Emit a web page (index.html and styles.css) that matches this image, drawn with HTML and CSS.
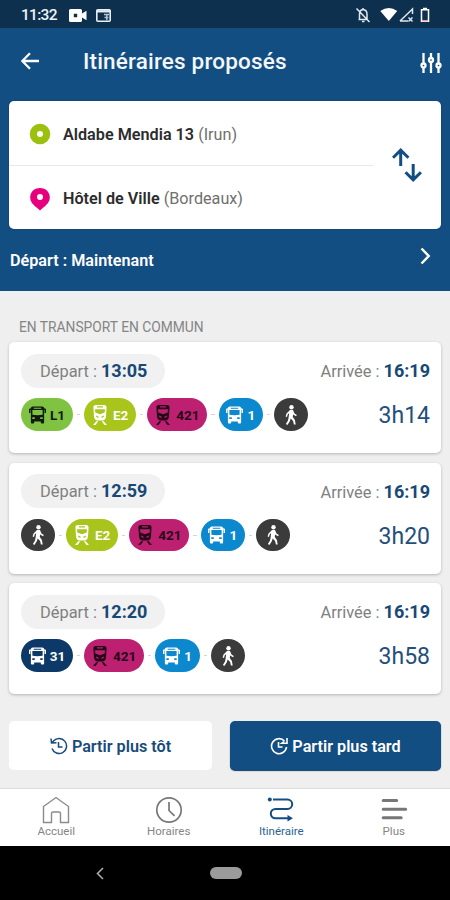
FILE: index.html
```html
<!DOCTYPE html>
<html lang="fr">
<head>
<meta charset="utf-8">
<title>Itinéraires proposés</title>
<link rel="stylesheet" href="styles.css">
</head>
<body>
<svg class="defs" width="0" height="0" aria-hidden="true">
  <symbol id="bus" viewBox="0 0 18 20">
    <path fill="currentColor" fill-rule="evenodd" d="M4 1h10q1.800 0 2.300 2H17q1 0 1 1v4h-1.500V4.500H16V18q0 1-1 1h-1.500q-1 0-1-1v-1h-7v1q0 1-1 1H3q-1 0-1-1V4.500h-.5V8H0V4q0-1 1-1h.7Q2.200 1 4 1ZM5 2.200v1.200h8V2.200ZM3.600 4.700v5.100q5.400 1 10.800 0V4.700ZM3.500 12.500v1.700h2.600v-1.700ZM11.900 12.500v1.700h2.600v-1.700Z"/>
  </symbol>
  <symbol id="train" viewBox="0 0 16 20">
    <path fill="currentColor" fill-rule="evenodd" d="M4 0h8q2.600 0 2.600 2.300L14 11.500Q13.500 15.500 10.500 15.500h-5Q2.500 15.500 2 11.500L1.400 2.300Q1.400 0 4 0ZM5 1.300v1.200h6V1.300ZM3 4.200 3.300 7.500 8 9.200l4.700-1.700.3-3.300ZM4 10.600l.3 1.400 2.200.9v-1.300ZM12 10.600l-2.500 1v1.300l2.200-.9ZM4.300 16.300h2L3.500 20H1ZM11.700 16.300h-2L12.500 20H15Z"/>
  </symbol>
  <symbol id="walk" viewBox="0 0 14 20">
    <circle cx="7.500" cy="2.200" r="2.200" fill="currentColor"/>
    <path fill="currentColor" d="M6 5h3l1.500 3.500 2.300 1.500-.7 1.200-2.700-1.500L9.200 9l-.4 3 2.100 3 .8 4.500H9.900L9.100 16l-2.400-2.500-1 3L3.400 20l-1.500-1L4 15.600l.7-3.600.4-3.700-1.300 1L3 12l-1.400-.4.900-3.200Z"/>
  </symbol>
</svg>
<div class="screen">
  <div class="status">
    <span class="clock">11:32</span>
    <svg class="camera" width="18" height="13" viewBox="0 0 18 13"><path fill="#fff" fill-rule="evenodd" d="M1.500 0h10Q13 0 13 1.500V4.500L17.500 1.800v9.400L13 8.500v3q0 1.500-1.500 1.500h-10Q0 13 0 11.500v-10Q0 0 1.500 0ZM4.800 4.800v3.400h3.400V4.800Z"/></svg>
    <svg class="news" width="15" height="13" viewBox="0 0 15 13"><rect x=".8" y=".8" width="13.400" height="11.400" rx="1" fill="none" stroke="#e9eef2" stroke-width="1.600"/><path d="M1 2.300h13" stroke="#e9eef2" stroke-width="2.300"/><path d="M8 5.500h5M8.500 8.500h4M10.800 5v6.500" stroke="#b5c2cc" stroke-width="1.500"/></svg>
    <span class="grow"></span>
    <svg class="sys" width="76" height="18" viewBox="0 0 76 18" fill="none" stroke="#dfe6ec" stroke-width="1.500">
      <path d="M1.500 13.500H10M2.500 13V8q0-4 3.500-4.500Q10 4 10 8v5M6 2v2M5 15.500h2.500M-.5 2.500 12.500 16"/>
      <path d="M23.300 5Q32 -1 40.200 5L31.800 15Z" fill="#fff" stroke="none"/>
      <path d="M43 15 55.500 3v5M43 15h8M51.500 11.500l4 4M55.500 11.500l-4 4"/>
      <path d="M64.500 3.700h7v11.500h-7Z M66 2.500h4" stroke="#fff"/><path d="M65 14.700h6" stroke="#d9a4a0"/>
    </svg>
  </div>
  <header class="top">
    <div class="titlebar">
      <svg class="back" width="19" height="18" viewBox="0 0 19 18"><path d="M18 9H1.500M9 1.200 1.300 9 9 16.800" fill="none" stroke="#fff" stroke-width="2.300"/></svg>
      <h1>Itinéraires proposés</h1>
      <svg class="filters" width="22" height="22" viewBox="0 0 22 22" fill="#134e82" stroke="#fff" stroke-width="2.300"><path d="M3.500 1v20M11 1v20M18.500 1v20"/><circle cx="3.500" cy="13.500" r="2"/><circle cx="11" cy="8" r="2"/><circle cx="18.500" cy="13.500" r="2"/></svg>
    </div>
    <div class="search">
      <div class="places">
        <div class="place"><svg width="22" height="24" viewBox="0 0 22 24"><circle cx="11" cy="12" r="10.300" fill="#9bc00d"/><circle cx="11" cy="12" r="3" fill="#fff"/></svg><p><b>Aldabe Mendia 13</b> <span>(Irun)</span></p></div>
        <div class="place"><svg width="22" height="24" viewBox="0 0 22 24"><path d="M11 1C5 1 1.200 5.200 1.200 10.400c0 5 4 8 6.800 10.400l3 2.700 3-2.700c2.800-2.400 6.800-5.400 6.800-10.400C20.800 5.200 17 1 11 1Z" fill="#e6007e"/><circle cx="11" cy="10" r="3" fill="#fff"/></svg><p><b>Hôtel de Ville</b> <span>(Bordeaux)</span></p></div>
      </div>
      <svg class="swap" width="30" height="34" viewBox="0 0 30 34" fill="none" stroke="#134e82" stroke-width="3"><path d="M8.700 18V3M1 9.800 8.700 2.200l7.700 7.600M21.200 16v15M13.500 24.200l7.700 7.600 7.700-7.600"/></svg>
    </div>
    <div class="when"><span>Départ : Maintenant</span><svg width="11" height="18" viewBox="0 0 11 18"><path d="m1.500 1.500 7.200 7.500-7.200 7.500" fill="none" stroke="#fff" stroke-width="2.500"/></svg></div>
  </header>
  <main>
    <h2>EN TRANSPORT EN COMMUN</h2>
    <article class="trip">
      <div class="times"><p class="leave">Départ : <b>13:05</b></p><p class="arrive">Arrivée : <b>16:19</b></p></div>
      <div class="legs">
        <span class="leg line-l1"><svg class="bus"><use href="#bus"/></svg>L1</span><i></i>
        <span class="leg line-e2"><svg class="train"><use href="#train"/></svg>E2</span><i></i>
        <span class="leg line-421"><svg class="train"><use href="#train"/></svg>421</span><i></i>
        <span class="leg line-1"><svg class="bus"><use href="#bus"/></svg>1</span><i></i>
        <span class="leg foot"><svg class="walk"><use href="#walk"/></svg></span>
        <strong>3h14</strong>
      </div>
    </article>
    <article class="trip">
      <div class="times"><p class="leave">Départ : <b>12:59</b></p><p class="arrive">Arrivée : <b>16:19</b></p></div>
      <div class="legs">
        <span class="leg foot"><svg class="walk"><use href="#walk"/></svg></span><i></i>
        <span class="leg line-e2"><svg class="train"><use href="#train"/></svg>E2</span><i></i>
        <span class="leg line-421"><svg class="train"><use href="#train"/></svg>421</span><i></i>
        <span class="leg line-1"><svg class="bus"><use href="#bus"/></svg>1</span><i></i>
        <span class="leg foot"><svg class="walk"><use href="#walk"/></svg></span>
        <strong>3h20</strong>
      </div>
    </article>
    <article class="trip">
      <div class="times"><p class="leave">Départ : <b>12:20</b></p><p class="arrive">Arrivée : <b>16:19</b></p></div>
      <div class="legs">
        <span class="leg line-31"><svg class="bus"><use href="#bus"/></svg>31</span><i></i>
        <span class="leg line-421"><svg class="train"><use href="#train"/></svg>421</span><i></i>
        <span class="leg line-1"><svg class="bus"><use href="#bus"/></svg>1</span><i></i>
        <span class="leg foot"><svg class="walk"><use href="#walk"/></svg></span>
        <strong>3h58</strong>
      </div>
    </article>
    <div class="actions">
      <button class="earlier"><svg width="18" height="18" viewBox="0 0 18 18" fill="none" stroke="currentColor" stroke-width="1.500"><path d="M3.500 4A7.500 7.500 0 1 1 2 11.500M1 1.500 1.500 6l5-.3M1.500 6 4 3.500M8.500 5v5h4"/></svg>Partir plus tôt</button>
      <button class="later"><svg width="18" height="18" viewBox="0 0 18 18" fill="none" stroke="currentColor" stroke-width="1.600"><path d="M14.500 4A7.500 7.500 0 1 0 16.500 10M17 1v5.200h-5.200L14.500 4M8.500 5v5h4"/></svg>Partir plus tard</button>
    </div>
  </main>
  <nav>
    <a><svg width="28" height="28" viewBox="0 0 28 28" fill="none" stroke="#8b8b8b" stroke-width="1.400"><path d="M1.500 10.500 14 1.500l12.500 9V26.500h-8v-9q0-1.500-1.500-1.500h-6q-1.500 0-1.500 1.500v9h-8Z"/></svg>Accueil</a>
    <a><svg width="28" height="28" viewBox="0 0 28 28" fill="none" stroke="#777" stroke-width="1.700"><circle cx="14" cy="14" r="12.200"/><path d="M14 6v8.500l5.500 5.300"/></svg>Horaires</a>
    <a class="active"><svg width="28" height="28" viewBox="0 0 28 28" fill="none" stroke="#134e82" stroke-width="2"><path d="M6 3.500h14.500a4.700 4.700 0 0 1 0 9.400H8.500a4.700 4.700 0 0 0 0 9.400H22"/><circle cx="2.800" cy="3.500" r="2" fill="#134e82" stroke="none"/><path d="m20.500 19 5.500 3.300-5.500 3.300Z" fill="#134e82" stroke="none"/></svg>Itinéraire</a>
    <a><svg width="28" height="28" viewBox="0 0 28 28" fill="none" stroke="#777" stroke-width="3" stroke-linecap="round"><path d="M3.200 4.500h13.500M3.200 13.200h22.500M3.200 21.700h18"/></svg>Plus</a>
  </nav>
  <footer><svg width="8" height="13" viewBox="0 0 8 13"><path d="M7 1 1.500 6.500 7 12" fill="none" stroke="#aaa" stroke-width="1.600"/></svg><span class="home"></span></footer>
</div>
</body>
</html>
```

FILE: styles.css
```css
* { box-sizing: border-box; margin: 0; padding: 0; }
body { font-family: Roboto, "Liberation Sans", sans-serif; background: #efefef; }
svg { display: block; flex: none; }
.defs { position: absolute; }
.screen { width: 450px; height: 900px; display: flex; flex-direction: column; overflow: hidden; }
.status { height: 28px; background: #0d304f; display: flex; align-items: center; padding: 2px 17px 0 21px; color: #eef3f7; }
.clock { width: 48px; font-size: 15.500px; letter-spacing: -.7px; font-weight: 500; white-space: nowrap; }
.news { margin-left: 9px; }
.sys { overflow: visible; }
.grow { flex: 1; }
.top { height: 263px; background: #134e82; padding: 0 9px; display: flex; flex-direction: column; }
.titlebar { height: 73px; display: flex; align-items: center; padding: 0 0 8px 12px; }
h1 { font-size: 22.500px; letter-spacing: .17px; font-weight: 500; color: #f4f7fa; margin-left: 43px; flex: 1; white-space: nowrap; line-height: 28px; }
.filters { margin: 4px -1px 0 0; }
.search { height: 128px; background: #fff; border-radius: 5px; display: flex; align-items: center; padding-right: 18px; box-shadow: 0 0 2px #0b3a65; }
.places { width: 364px; margin-right: 19px; }
.place { height: 64px; display: flex; align-items: center; padding: 2px 0 0 20px; font-size: 16.200px; color: #707070; }
.place + .place { border-top: 1px solid #e9e9e9; }
.place p { margin-left: 12px; white-space: nowrap; }
.place b { color: #2c2c2c; font-weight: 600; }
.when { height: 62px; display: flex; align-items: center; justify-content: space-between; padding: 0 10px 0 1px; color: #fff; font-size: 16.200px; font-weight: 600; }
.when svg { margin-bottom: 9px; }
main { height: 497px; padding: 0 9px; }
h2 { height: 51px; padding: 26px 0 0 10px; font-size: 13.800px; line-height: 20px; font-weight: 400; color: #858585; white-space: nowrap; }
.trip { height: 111px; margin-bottom: 9.500px; background: #fff; border-radius: 5px; padding: 11.500px 11px 0 12px; box-shadow: 0 1px 3px rgba(0,0,0,.25); }
.times { height: 34px; display: flex; justify-content: space-between; align-items: center; color: #808080; font-size: 16.400px; }
.times p { white-space: nowrap; }
.times b { color: #174876; font-weight: 700; font-size: 18px; }
.leave { width: 144px; height: 34px; line-height: 34px; border-radius: 17px; background: #f1f1f1; padding-left: 19px; }
.legs { display: flex; align-items: center; margin-top: 10.500px; height: 33px; }
.leg { height: 32.500px; border-radius: 17px; display: flex; align-items: center; justify-content: center; gap: 4px; font-size: 13.500px; font-weight: 700; }
.legs i { width: 11.200px; height: 1px; border: solid #fff; border-width: 0 4px; background: #d5d5d5; }
.legs strong { margin-left: auto; font-size: 23px; font-weight: 400; color: #234f79; line-height: 32px; margin-top: 3px; }
.bus { width: 17px; height: 20px; }
.train { width: 16px; height: 20px; }
.walk { width: 14px; height: 20px; }
.line-l1 { width: 52px; background: #80c342; color: #101b10; }
.line-e2 { width: 52px; background: #a9c41a; color: #fff; gap: 5px; }
.line-421 { width: 60px; background: #bd2070; color: #240818; gap: 5px; }
.line-1 { width: 44.500px; background: #0c88ce; color: #fff; }
.line-31 { width: 52px; background: #0d3968; color: #fff; }
.foot { width: 34px; background: #3b3b3b; color: #fff; }
.actions { display: flex; justify-content: space-between; padding-top: 17px; }
button { height: 49px; border: 0; border-radius: 5px; display: flex; align-items: center; justify-content: center; gap: 4px; font: 600 16.200px Roboto, "Liberation Sans", sans-serif; padding-top: 2px; white-space: nowrap; }
.earlier { width: 203px; background: #fff; color: #174b7a; }
.later { width: 211px; background: #134e82; color: #fff; box-shadow: 0 1px 1px #0b3965; }
nav { height: 58px; border-top: 1px solid #dcdcdc; background: #fff; display: grid; grid-template-columns: repeat(4, 112.500px); }
nav a { display: flex; flex-direction: column; align-items: center; padding-top: 7px; font-size: 11.500px; line-height: 14px; color: #858585; }
nav .active { color: #2b638f; }
footer { height: 54px; background: #000; display: flex; align-items: center; padding-left: 96px; }
.home { width: 32px; height: 12px; border-radius: 6px; background: #9b9b9b; margin-left: 106px; }
```
